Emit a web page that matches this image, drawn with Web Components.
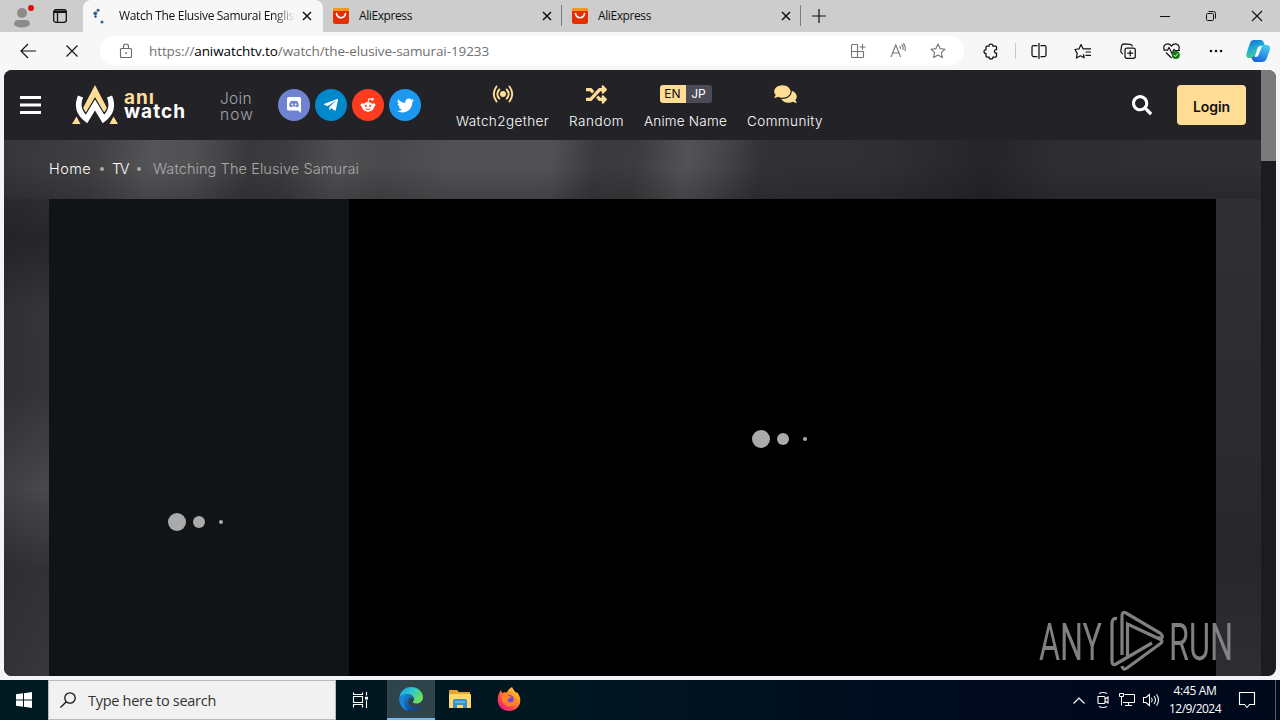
<!DOCTYPE html>
<html lang="en">
<head>
<meta charset="utf-8">
<title>Watch The Elusive Samurai</title>
<style>
	html, body {
		margin: 0;
		width: 1280px;
		height: 720px;
		overflow: hidden;
	}
</style>
</head>
<body>
<desktop-screen></desktop-screen>

<script>
// every icon: [viewBox, markup]
const icons = {
	user: ['0 0 24 24', '<g fill="#8d8a88"><circle cx="12" cy="9" r="5"/><path d="M4 21q0-5 4-5h8q4 0 4 5-8 5-16 0z"/></g><circle cx="21" cy="4" r="3" fill="#e50914"/>'],
	workspace: ['0 0 16 16', '<rect x="1.7" y="1.7" width="12.6" height="12.6" rx="2.4" fill="none" stroke="#111" stroke-width="1.3"/><path d="M2 2.500h12V5H2z" fill="#111"/><path d="M5.500 5v9" stroke="#111" stroke-width="1.300"/>'],
	spinner: ['0 0 16 16', '<g fill="#31618f"><circle cx="7" cy="2.3" r="1.5"/><circle cx="4.300" cy="5.300" r="1.9"/><circle cx="4.500" cy="8.600" r="1.3"/><circle cx="11" cy="14" r="1.5"/></g>'],
	close: ['0 0 12 12', '<path d="M2 2l8 8M10 2l-8 8" stroke="currentColor" stroke-width="1.5"/>'],
	ali: ['0 0 16 16', '<rect width="16" height="16" rx="2.5" fill="#e62e04"/><path d="M0 3V2.500Q0 0 2.500 0h11Q16 0 16 2.500V3z" fill="#f7971d"/><path d="M3.500 5.500c1 5.500 8 5.500 9 0" fill="none" stroke="#fff" stroke-width="1.500" stroke-linecap="round"/>'],
	plus: ['0 0 14 14', '<path d="M7 0v14M0 7h14" stroke="#111" stroke-width="1.2"/>'],
	minimize: ['0 0 10 10', '<path d="M0 5.500h10" stroke="#111"/>'],
	restore: ['0 0 10 10', '<rect x=".5" y="2.500" width="7" height="7" rx="1" fill="none" stroke="#111"/><path d="M2.500.500h5q2 0 2 2v5" fill="none" stroke="#111"/>'],
	winclose: ['0 0 10 10', '<path d="M0 0l10 10M10 0L0 10" stroke="#111" stroke-width="1.1"/>'],
	back: ['0 0 16 16', '<path d="M16 8H1M8 1L1 8l7 7" fill="none" stroke="#111" stroke-width="1.2"/>'],
	stop: ['0 0 12 12', '<path d="M.5.500l11 11M11.500.500l-11 11" stroke="#111" stroke-width="1.1"/>'],
	lock: ['0 0 14 16', '<path d="M1.500 5.500h10q1 0 1 1v7q0 1-1 1h-9q-1 0-1-1v-7q0-1 1-1M4.500 5.500V3.500a2.500 2.500 0 0 1 5 0v2" fill="none" stroke="#6a6a6a" stroke-width="1.1"/><circle cx="7" cy="10" r=".9" fill="#6a6a6a"/>'],
	apps: ['0 0 16 16', '<path d="M7.500 1.500H2.500q-1 0-1 1v11q0 1 1 1h10q1 0 1-1v-5H1.500M7.500 1.500v13M12.500 1v6M9.500 4h6" fill="none" stroke="#747474" stroke-width="1.1"/>'],
	aloud: ['0 0 16 16', '<path d="M1 14L5.800 2l4.800 12M2.700 10h6.200M9.500 3q1.500 1.200.8 3M11.500 1.500q2.500 2 1.300 5.500M13.300.500q3 3 1.500 7.500" fill="none" stroke="#747474" stroke-width="1.1"/>'],
	star: ['0 0 16 16', '<path d="M8 1l2.100 4.600 5 .6-3.700 3.400 1 5L8 12.100l-4.400 2.500 1-5L.9 6.200l5-.6z" fill="none" stroke="#747474" stroke-width="1.1" stroke-linejoin="round"/>'],
	puzzle: ['0 0 16 16', '<path d="M6 3a2 2 0 0 1 4 0h2.500q1 0 1 1v2.500h-.8a1.900 1.900 0 0 0 0 3.600h.8V13q0 1-1 1H10a2 2 0 0 1-4 0H4q-1 0-1-1v-2.500a2 2 0 0 1 0-4V4q0-1 1-1z" fill="none" stroke="#111" stroke-width="1.25"/>'],
	split: ['0 0 16 16', '<path d="M6.500 2.500h-4q-1.500 0-1.500 1.500v8q0 1.500 1.500 1.500h4M9.500 2.500h4q1.500 0 1.500 1.500v8q0 1.500-1.500 1.500h-4M8 0v16" fill="none" stroke="#111" stroke-width="1.25"/>'],
	favorites: ['0 0 17 16', '<path d="M8.500 11.200l.6 3.600-3.600-2-4.100 2.200.8-4.600L0 6.500l4-.6L6 1.500l2.200 4.400H16M10.500 9h5.500M10.500 12.300h5.500" fill="none" stroke="#111" stroke-width="1.200" stroke-linejoin="round"/>'],
	collections: ['0 0 16 16', '<rect x="5" y="5" width="10.300" height="10.300" rx="2" fill="none" stroke="#111" stroke-width="1.250"/><path d="M10.200 7.200v6M7.200 10.200h6M3 11Q.8 10 .8 8L1.600 3Q2 .8 4 .8l6 .5q2 .2 2.500 2" fill="none" stroke="#111" stroke-width="1.250"/>'],
	heart: ['0 0 18 16', '<path d="M1.500 7C-1 2.500 4.500-1.800 8.500 3c4-4.800 9.500-.5 7 4M3 9.500l5.500 5.500M.5 7.200h4L6 4.500l3 6 2-4 1 1h5" fill="none" stroke="#111" stroke-width="1.200"/><circle cx="12.800" cy="12" r="4" fill="#107c10"/><path d="M10.800 12l1.500 1.500 2.700-3" fill="none" stroke="#fff"/>'],
	more: ['0 0 14 4', '<g fill="#111"><circle cx="2" cy="2" r="1.300"/><circle cx="7" cy="2" r="1.300"/><circle cx="12" cy="2" r="1.300"/></g>'],
	copilot: ['0 0 24 24', '<defs><linearGradient id="a" x2=".4" y2="1"><stop stop-color="#1767d2"/><stop offset=".5" stop-color="#20a7d8"/><stop offset="1" stop-color="#48d68a"/></linearGradient><linearGradient id="b" y1="1" x2=".5" y2="0"><stop stop-color="#1554d8"/><stop offset="1" stop-color="#3fc4ee"/></linearGradient></defs><path d="M8 1h7q2 0 3 3l1 3h-5q-2 0-3 3l-2 6q-1 3-4 3H3q-4 0-2-6L4 4q1-3 4-3z" fill="url(#a)"/><path d="M16 23H9q-2 0-3-3l-.5-2q3 0 4-4l2-5q1-3 5-3h4q5 0 3 6l-3 8q-1 3-4.500 3z" fill="url(#b)"/><path d="M12 8.500q.6-1.500 2.500-1.500h1.500l-3.400 9q-.7 2-2.800 2H8.500z" fill="#f7f7f7"/>'],
	menu: ['0 0 21 18', '<path d="M0 1.500h21M0 9h21M0 16.500h21" stroke="#fff" stroke-width="3"/>'],
	logo: ['0 0 46 40', '<path d="M10.500 24L23 0l12.500 24-4 4L23 12.500 14.500 28z" fill="#ffdd95"/><path d="M8.500 11.500Q3 25 14.500 34L23 20l8.500 14Q43 25 37.500 11.500" fill="none" stroke="#232327" stroke-width="8"/><path d="M8.500 11.500Q3 25 14.500 34L23 20l8.500 14Q43 25 37.500 11.500" fill="none" stroke="#fff" stroke-width="5.600"/><path d="M4.500 31.500l4 7.500H0zM41.500 31.500L46 39h-8.500z" fill="#ffdd95"/>'],
	discord: ['0 0 16 16', '<path d="M2.500 0h11q1.500 0 1.500 1.500V16l-3-2.500H2.500Q1 13.500 1 12V1.500Q1 0 2.500 0z" fill="#fff"/><path d="M4.500 4.300q3.500-1.300 7 0 1.300 2.500 1.300 4.700-1.200 1.300-2.300 1.300L9.800 9.400H6.200l-.7.900Q4.300 10.200 3.200 9q0-2.200 1.300-4.700z" fill="#7083d3"/><circle cx="6.300" cy="7.400" r=".9" fill="#fff"/><circle cx="9.700" cy="7.400" r=".9" fill="#fff"/>'],
	telegram: ['0 0 448 512', '<path fill="#fff" d="M446.700 98.600l-67.600 318.800c-5.100 22.500-18.400 28.100-37.300 17.500l-103-75.900-49.700 47.800c-5.500 5.500-10.100 10.100-20.700 10.100l7.400-104.900 190.900-172.500c8.300-7.400-1.800-11.500-12.900-4.100L117.800 284 16.200 252.200c-22.100-6.900-22.500-22.100 4.600-32.700L418.200 66.400c18.400-6.900 34.500 4.100 28.500 32.200z"/>'],
	reddit: ['0 0 16 16', '<g fill="#fff"><ellipse cx="8" cy="10" rx="6" ry="4.700"/><circle cx="2.300" cy="8" r="1.700"/><circle cx="13.700" cy="8" r="1.700"/><circle cx="12.300" cy="2.300" r="1.400"/></g><path d="M8 6l.8-4.300 3 .7" fill="none" stroke="#fff"/><g fill="#ff3c1f"><circle cx="5.700" cy="9" r="1.100"/><circle cx="10.300" cy="9" r="1.100"/></g><path d="M5.500 11.800q2.500 1.700 5 0" fill="none" stroke="#ff3c1f" stroke-width=".9"/>'],
	twitter: ['0 0 512 512', '<path fill="#fff" d="M459.370 151.716c.325 4.548.325 9.097.325 13.645 0 138.720-105.583 298.558-298.558 298.558-59.452 0-114.680-17.219-161.137-47.106 8.447.974 16.568 1.299 25.340 1.299 49.055 0 94.213-16.568 130.274-44.832-46.132-.975-84.792-31.188-98.112-72.772 6.498.974 12.995 1.624 19.818 1.624 9.421 0 18.843-1.300 27.614-3.573-48.081-9.747-84.143-51.980-84.143-102.985v-1.299c13.969 7.797 30.214 12.670 47.431 13.319-28.264-18.843-46.781-51.005-46.781-87.391 0-19.492 5.197-37.360 14.294-52.954 51.655 63.675 129.300 105.258 216.365 109.807-1.624-7.797-2.599-15.918-2.599-24.040 0-57.828 46.782-104.934 104.934-104.934 30.213 0 57.502 12.670 76.670 33.137 23.715-4.548 46.456-13.320 66.599-25.340-7.798 24.366-24.366 44.833-46.132 57.827 21.117-2.273 41.584-8.122 60.426-16.243-14.292 20.791-32.161 39.308-52.628 54.253z"/>'],
	broadcast: ['0 0 20 18', '<circle cx="10" cy="9" r="3" fill="#ffdd95"/><path d="M6.300 4.500q-4 4.500 0 9M13.700 4.500q4 4.500 0 9M3.500 1.500q-5.500 7.500 0 15M16.500 1.500q5.500 7.500 0 15" fill="none" stroke="#ffdd95" stroke-width="1.900" stroke-linecap="round"/>'],
	random: ['0 0 512 512', '<path fill="#ffdd95" d="M504.971 359.029c9.373 9.373 9.373 24.569 0 33.941l-80 79.984c-15.010 15.010-40.971 4.490-40.971-16.971V416h-58.785a12.004 12.004 0 0 1-8.773-3.812l-70.556-75.596 53.333-57.143L352 336h32v-39.981c0-21.438 25.943-31.998 40.971-16.971l80 79.981zM12 176h84l52.781 56.551 53.333-57.143-70.556-75.596A11.999 11.999 0 0 0 122.785 96H12c-6.627 0-12 5.373-12 12v56c0 6.627 5.373 12 12 12zm372 0v39.984c0 21.460 25.961 31.980 40.971 16.971l80-79.984c9.373-9.373 9.373-24.569 0-33.941l-80-79.981C409.943 24.021 384 34.582 384 56.019V96h-58.785a12.004 12.004 0 0 0-8.773 3.812L96 336H12c-6.627 0-12 5.373-12 12v56c0 6.627 5.373 12 12 12h110.785c3.326 0 6.503-1.381 8.773-3.812L352 176h32z"/>'],
	comments: ['0 0 576 512', '<path fill="#ffdd95" d="M416 192c0-88.400-93.100-160-208-160S0 103.600 0 192c0 34.300 14.100 65.900 38 92-13.400 30.200-35.500 54.200-35.800 54.500-2.200 2.300-2.800 5.700-1.500 8.700S4.800 352 8 352c36.600 0 66.900-12.300 88.700-25 32.200 15.700 70.300 25 111.300 25 114.900 0 208-71.600 208-160zm122 220c23.900-26 38-57.700 38-92 0-66.900-53.500-124.200-129.300-148.100.9 6.600 1.300 13.300 1.300 20.100 0 105.900-107.700 192-240 192-10.800 0-21.300-.8-31.700-1.900C207.800 439.600 281.800 480 368 480c41 0 79.100-9.200 111.300-25 21.800 12.700 52.100 25 88.700 25 3.200 0 6.100-1.900 7.300-4.800 1.300-2.900.7-6.300-1.500-8.700-.3-.3-22.400-24.200-35.800-54.500z"/>'],
	search: ['0 0 512 512', '<path fill="#fff" d="M505 442.700L405.300 343c-4.500-4.500-10.600-7-17-7H372c27.600-35.300 44-79.700 44-128C416 93.100 322.900 0 208 0S0 93.100 0 208s93.100 208 208 208c48.300 0 92.700-16.400 128-44v16.300c0 6.400 2.500 12.500 7 17l99.700 99.700c9.400 9.400 24.600 9.400 33.900 0l28.300-28.300c9.400-9.400 9.400-24.600.1-34zM208 336c-70.700 0-128-57.200-128-128 0-70.700 57.200-128 128-128 70.700 0 128 57.200 128 128 0 70.700-57.200 128-128 128z"/>'],
	windows: ['0 0 16 16', '<path d="M0 2.300L7 1.300V7.500H0zM8 1.200L16 0v7.500H8zM0 8.500h7v6.200l-7-1zM8 8.500h8V16l-8-1.200z" fill="#fff"/>'],
	find: ['0 0 16 16', '<circle cx="10" cy="6" r="5.200" fill="none" stroke="#111" stroke-width="1.300"/><path d="M6.300 9.700L.5 15.500" stroke="#111" stroke-width="1.300"/>'],
	taskview: ['0 0 17 16', '<path d="M1.500.5v2h9v-2M1.500 4.500h9v6h-9zM1.500 15.500v-3h9v3M14.500 0v3.500M14.500 8.500V16" fill="none" stroke="#fff" stroke-width="1.100"/><path d="M13 4.800h3v2.800h-3z" fill="#fff"/>'],
	edge: ['0 0 24 24', '<defs><linearGradient id="e" x2="1" y2=".5"><stop stop-color="#1b9de2"/><stop offset=".55" stop-color="#2fc9c9"/><stop offset="1" stop-color="#6be05c"/></linearGradient><linearGradient id="f" x2=".8" y2="1"><stop stop-color="#1b8bdc"/><stop offset="1" stop-color="#0c3f88"/></linearGradient></defs><path d="M.3 11C1 4 6 0 12 0c7 0 12 5 12 10 0 4-3 6.500-6.500 6.500-3 0-4-1-3.500-2 2-2 1-6-3-7C7 6.500 2 8 .3 11z" fill="url(#e)"/><path d="M.3 11C2 8 6 6.500 10 7.500c2.500.6 4 2 4.300 4C12 9.500 9 12 9 15c0 4 5 6 9 5.500 2-.3 3.500-1.500 4-1.300.5.300-3 4.800-9.500 4.800C4 24-.5 17 .3 11z" fill="url(#f)"/><path d="M.3 11C2 8 5 7 8 8.500c-4 2-5 9 1 15C2.500 22 0 16 .3 11z" fill="#1788d8"/>'],
	folder: ['0 0 22 20', '<path d="M0 2q0-1 1-1h7l2 2h11v16H0z" fill="#e5a52a"/><path d="M1 5h20q1 0 1 1v13H0V6z" fill="#ffd868"/><path d="M4 19v-7q0-2 2-2h10q2 0 2 2v7h-4v-3H8v3z" fill="#3e91cf"/><path d="M6 12h10v2H6z" fill="#58b2e8"/>'],
	firefox: ['0 0 24 24', '<defs><linearGradient id="x" x1="1" y1="0" x2=".2" y2="1"><stop stop-color="#fff14d"/><stop offset=".4" stop-color="#ff9422"/><stop offset=".75" stop-color="#ff3f52"/><stop offset="1" stop-color="#e3198d"/></linearGradient></defs><path d="M15 0c1 3 3 3.500 4 6l1-1c2 3 3.500 5 3.300 9C23 20 18 24 12 24S.8 20 .7 13C.7 9 2 6 4 3l1 3c2-1 3-1 5-.500C11 3 13 1 15 0z" fill="url(#x)"/><circle cx="12" cy="13" r="5.200" fill="#7545dc"/><path d="M5 8c3-2 5-1 7 1l3 1-4 2c-1 2 1 4 4 3 2-1 2-3 1-6 4 3 4 7 1 9-5 3-11 0-12-5z" fill="#ff8427"/>'],
	chevron: ['0 0 12 7', '<path d="M.5 6.500L6 1l5.500 5.500" fill="none" stroke="#fff" stroke-width="1.200"/>'],
	meet: ['0 0 12 16', '<path d="M1 4.500h6q1 0 1 1v5q0 1-1 1H2q-1 0-1-1zM8 7l3-2v6L8 9M2 1.500q4-2 8 0M2 14.500q4 2 8 0" fill="none" stroke="#fff" stroke-width="1.100"/>'],
	network: ['0 0 16 14', '<path d="M5.500 1.500h10v8H4M9.500 9.500v3M6 12.500h7M.5.500h4v3h-4zM2.500 3.500v9" fill="none" stroke="#fff"/>'],
	sound: ['0 0 17 14', '<path d="M.5 4.500H3l3.500-3v11L3 9.500H.5zM8.500 4.700q1.600 2.300 0 4.600M11 3q3 4 0 8M13.500 1.300q4 5.700 0 11.400" fill="none" stroke="#fff" stroke-width="1.050"/>'],
	notes: ['0 0 16 16', '<path d="M.5.500h15v12h-5L8 15.500 5.500 12.500h-5z" fill="none" stroke="#fff" stroke-width="1.100"/>'],
	play: ['0 0 54 62', '<path d="M7 8.500Q2 8 2 13v38q0 5 4 3L42 33M12 45V6q0-5 4-3l34 20q4 3 1 6l-3-2M17.500 46V14l33 15.500q3 2 0 4L17 58q-4 3-5-2" fill="none" stroke="#8b8b8b" stroke-width="3.200"/>'],
};

// base: clones the class template into an open shadow root
class Base extends HTMLElement {
	constructor() {
		super();
		this.attachShadow({ mode: 'open' });
	}
	connectedCallback() {
		const template = document.createElement('template');
		template.innerHTML = this.getTemplate();
		this.shadowRoot.replaceChildren(template.content.cloneNode(true));
	}
}

class UiIcon extends Base {
	getTemplate() {
		const [box, body] = icons[this.getAttribute('name')];
		const w = this.getAttribute('w');
		const h = this.getAttribute('h') || w;
		return `
		<style>
		:host { display: block; flex: none; width: ${w}px; height: ${h}px; }
		svg { display: block; overflow: visible; }
		</style>
		<svg width="${w}" height="${h}" viewBox="${box}">${body}</svg>`;
	}
}

// one line of text, tracked so that it fills the width in "w"
class UiText extends Base {
	getTemplate() {
		return `
		<style>
		:host { display: block; flex: none; white-space: nowrap; width: ${this.getAttribute('w')}px; }
		span { display: inline-block; }
		</style>
		<span><slot></slot></span>`;
	}
	connectedCallback() {
		super.connectedCallback();
		const span = this.shadowRoot.querySelector('span');
		const w = Number(this.getAttribute('w'));
		const n = this.textContent.length;
		span.style.letterSpacing = ((w - span.getBoundingClientRect().width) / n) + 'px';
	}
}

class BrowserTab extends Base {
	getTemplate() {
		return `
		<style>
		:host { display: flex; align-items: center; box-sizing: border-box; flex: none; height: 32px; padding: 0 8px 0 10px; color: #111; border-right: 1px solid #7b7b7b; border-image: linear-gradient(transparent 18%, #7b7b7b 18%, #7b7b7b 80%, transparent 80%) 1; }
		:host([active]) { background: #f7f7f7; border: none; border-radius: 8px 8px 0 0; padding: 0 10px 0 8px; }
		.title { flex: 1; min-width: 0; overflow: hidden; margin: 0 6px 0 10px; }
		:host([active]) .title { margin-left: 12px; mask-image: linear-gradient(90deg, #000 88%, transparent); }
		</style>
		<ui-icon name="${this.getAttribute('icon')}" w="16"></ui-icon>
		<div class="title"><slot></slot></div>
		<ui-icon name="close" w="12"></ui-icon>`;
	}
}

class TabStrip extends Base {
	getTemplate() {
		return `
		<style>
		:host { display: flex; align-items: center; height: 32px; background: #cdcdcd; font: 12px/16px "Open Sans", sans-serif; }
		.user { margin-left: 10px; }
		.work { margin: 0 15px 0 18px; }
		.plus { margin-left: 11px; }
		.window { display: flex; gap: 36px; margin: 0 18px 0 auto; }
		browser-tab:nth-of-type(1) { width: 240px; }
		browser-tab:nth-of-type(2) { width: 239px; }
		browser-tab:nth-of-type(3) { width: 239px; }
		</style>
		<ui-icon class="user" name="user" w="24"></ui-icon>
		<ui-icon class="work" name="workspace" w="16"></ui-icon>
		<browser-tab active icon="spinner"><ui-text w="175">Watch The Elusive Samurai Englis</ui-text></browser-tab>
		<browser-tab icon="ali"><ui-text w="53">AliExpress</ui-text></browser-tab>
		<browser-tab icon="ali"><ui-text w="53">AliExpress</ui-text></browser-tab>
		<ui-icon class="plus" name="plus" w="14"></ui-icon>
		<div class="window">
			<ui-icon name="minimize" w="10"></ui-icon>
			<ui-icon name="restore" w="10"></ui-icon>
			<ui-icon name="winclose" w="10"></ui-icon>
		</div>`;
	}
}

class AddressBar extends Base {
	getTemplate() {
		return `
		<style>
		:host { display: flex; align-items: center; height: 38px; background: #f7f7f7; }
		.back { margin-left: 20px; }
		.stop { margin: 0 22px 0 30px; }
		.url { display: flex; align-items: center; box-sizing: border-box; width: 864px; height: 30px; border-radius: 15px; background: #fff; padding: 0 18px 0 19px; font: 13.5px "Open Sans", sans-serif; color: #707070; }
		.url ui-text { margin: 0 auto 0 16px; }
		.url b { font-weight: 400; color: #000; }
		.actions { display: flex; gap: 24px; }
		.tools { display: flex; align-items: center; gap: 28px; margin-left: 19px; }
		.line { width: 1px; height: 16px; background: #c8c8c8; margin: 0 -13px 0 -12px; }
		</style>
		<ui-icon class="back" name="back" w="16"></ui-icon>
		<ui-icon class="stop" name="stop" w="12"></ui-icon>
		<div class="url">
			<ui-icon name="lock" w="14" h="16"></ui-icon>
			<ui-text w="340">https://<b>aniwatchtv.to</b>/watch/the-elusive-samurai-19233</ui-text>
			<div class="actions">
				<ui-icon name="apps" w="16"></ui-icon>
				<ui-icon name="aloud" w="16"></ui-icon>
				<ui-icon name="star" w="16"></ui-icon>
			</div>
		</div>
		<div class="tools">
			<ui-icon name="puzzle" w="16"></ui-icon>
			<div class="line"></div>
			<ui-icon name="split" w="16"></ui-icon>
			<ui-icon name="favorites" w="17" h="16"></ui-icon>
			<ui-icon name="collections" w="16"></ui-icon>
			<ui-icon name="heart" w="18" h="16" style="margin-left:-1px"></ui-icon>
			<ui-icon name="more" w="14" h="4"></ui-icon>
			<ui-icon name="copilot" w="24" style="margin-left:-5px"></ui-icon>
		</div>`;
	}
}

class SocialLink extends Base {
	getTemplate() {
		return `
		<style>
		:host { display: grid; place-items: center; width: 32px; height: 32px; border-radius: 50%; background: var(--brand); }
		</style>
		<ui-icon name="${this.getAttribute('icon')}" w="${this.getAttribute('w')}"></ui-icon>`;
	}
}

class NavItem extends Base {
	getTemplate() {
		return `
		<style>
		:host { display: flex; flex-direction: column; align-items: center; gap: 9px; color: #fff; font-size: 13.5px; line-height: 18px; }
		.top { display: flex; align-items: center; height: 18px; }
		</style>
		<div class="top"><slot name="icon"></slot></div>
		<slot></slot>`;
	}
}

class LanguageSwitch extends Base {
	getTemplate() {
		return `
		<style>
		:host { display: flex; width: 52px; height: 18px; border-radius: 3px; overflow: hidden; font: 12px/18px Inter, sans-serif; }
		span { flex: 1; text-align: center; color: #fff; background: #4b4c55; }
		.on { color: #111; background: #ffdd95; }
		</style>
		<span class="on">EN</span><span>JP</span>`;
	}
}

class SiteLogo extends Base {
	getTemplate() {
		return `
		<style>
		:host { display: flex; gap: 6px; align-items: center; }
		.name { font: 700 19px/14px Inter, sans-serif; color: #fff; }
		.name .top { color: #ffdd95; }
		</style>
		<ui-icon name="logo" w="46" h="40"></ui-icon>
		<div class="name"><ui-text class="top" w="31">anı</ui-text><ui-text w="62">watch</ui-text></div>`;
	}
}

class SiteHeader extends Base {
	getTemplate() {
		return `
		<style>
		:host { display: flex; align-items: center; height: 70px; background: #232327; font-family: Inter, sans-serif; font-weight: 300; }
		.menu { margin-left: 16px; }
		site-logo { margin-left: 31px; }
		.join { margin-left: 34px; color: #a5a5a7; font-size: 15.5px; line-height: 16px; margin-top: 3px; width: 34px; }
		.social { display: flex; gap: 5px; margin-left: 24px; }
		nav { display: flex; gap: 20px; margin: 5px 0 0 35px; }
		.search { margin-left: auto; }
		button { box-sizing: border-box; width: 69px; height: 40px; margin: 0 15px 0 25px; border: none; border-radius: 4px; padding: 2px 0 0 16px; background: #ffdd95; color: #111; font: 600 14px Inter, sans-serif; text-align: left; }
		</style>
		<ui-icon class="menu" name="menu" w="21" h="18"></ui-icon>
		<site-logo></site-logo>
		<div class="join"><ui-text w="32">Join</ui-text><ui-text w="34">now</ui-text></div>
		<div class="social">
			<social-link icon="discord" w="16" style="--brand:#7083d3"></social-link>
			<social-link icon="telegram" w="16" style="--brand:#08c"></social-link>
			<social-link icon="reddit" w="16" style="--brand:#ff3c1f"></social-link>
			<social-link icon="twitter" w="17" style="--brand:#1d98f0"></social-link>
		</div>
		<nav>
			<nav-item><ui-icon slot="icon" name="broadcast" w="20" h="18"></ui-icon><ui-text w="93">Watch2gether</ui-text></nav-item>
			<nav-item><ui-icon slot="icon" name="random" w="21"></ui-icon><ui-text w="55">Random</ui-text></nav-item>
			<nav-item><language-switch slot="icon"></language-switch><ui-text w="83">Anime Name</ui-text></nav-item>
			<nav-item><ui-icon slot="icon" name="comments" w="23" h="20"></ui-icon><ui-text w="76">Community</ui-text></nav-item>
		</nav>
		<ui-icon class="search" name="search" w="20"></ui-icon>
		<button><ui-text w="37">Login</ui-text></button>`;
	}
}

class BreadCrumb extends Base {
	getTemplate() {
		return `
		<style>
		:host { display: flex; align-items: center; box-sizing: border-box; height: 59px; padding: 0 0 1px 45px; font: 300 14.5px/18px Inter, sans-serif; color: #fff; }
		i { width: 4px; height: 4px; border-radius: 50%; background: #aaa; margin: 0 8px 0 9px; }
		.current { color: #aaaaac; margin-left: 4px; }
		</style>
		<ui-text w="42">Home</ui-text><i></i>
		<ui-text w="16">TV</ui-text><i></i>
		<ui-text class="current" w="206">Watching The Elusive Samurai</ui-text>`;
	}
}

class LoadingDots extends Base {
	getTemplate() {
		return `
		<style>
		:host { display: flex; align-items: center; }
		i { border-radius: 50%; background: #aaa; width: 18px; height: 18px; }
		i:nth-of-type(2) { width: 12px; height: 12px; margin: 0 14px 0 7px; }
		i:nth-of-type(3) { width: 4px; height: 4px; }
		</style>
		<i></i><i></i><i></i>`;
	}
}

class WatchPage extends Base {
	getTemplate() {
		return `
		<style>
		:host { display: flex; height: 606px; border-radius: 8px; overflow: hidden; background: #1c1b20; }
		main { width: 1257px; }
		.cover { height: 536px; background:
			linear-gradient(180deg, #303034, #2a2a2e 60%, #27272b 75%, #2e2e32) 100% 59px / 60px 477px no-repeat,
			linear-gradient(100deg, rgba(28, 28, 31, .5), transparent) 0 59px / 45px 477px no-repeat,
			linear-gradient(180deg, #363638 0, #2b2b2d 40px, #3f3f42 110px, #3b3b3d 190px, #505053 290px, #48484b 310px, #343437 370px, #38383b 100%) 0 59px / 45px 477px no-repeat,
			linear-gradient(180deg, transparent 45%, rgba(20, 20, 24, .25)) 0 0 / 100% 59px no-repeat,
			linear-gradient(97deg, #363638 0, #404042 90px, #555558 150px, #505053 190px, #39393b 245px, #3c3c3e 280px, #505052 335px, #49494b 380px, #525255 450px, #515154 545px, #3a3a3d 590px, #3c3c3e 630px, #535356 680px, #48484b 710px, #323235 755px, #303034 870px, #242429 980px, #2d2d32 1050px, #303034 100%); }
		.player { display: flex; width: 1167px; height: 477px; margin-left: 45px; }
		aside { box-sizing: border-box; width: 300px; background: #111417; padding: 314px 0 0 119px; }
		.video { box-sizing: border-box; flex: 1; background: #000; padding: 231px 0 0 403px; }
		.thumb { width: 15px; height: 91px; background: #7a7a7a; }
		</style>
		<main>
			<site-header></site-header>
			<div class="cover">
				<bread-crumb></bread-crumb>
				<div class="player">
					<aside><loading-dots></loading-dots></aside>
					<div class="video"><loading-dots></loading-dots></div>
				</div>
			</div>
		</main>
		<div class="thumb"></div>`;
	}
}

class WaterMark extends Base {
	getTemplate() {
		return `
		<style>
		:host { position: absolute; left: 1039px; top: 610px; display: flex; align-items: center; gap: 7px; opacity: .92; }
		svg { display: block; overflow: visible; }
		text { font: 400 51px Roboto, sans-serif; fill: #8b8b8b; }
		</style>
		<svg width="64" height="62"><text x="0" y="50" textLength="63" lengthAdjust="spacingAndGlyphs">ANY</text></svg>
		<ui-icon name="play" w="54" h="62"></ui-icon>
		<svg width="62" height="62"><text x="-2" y="50" textLength="64" lengthAdjust="spacingAndGlyphs">RUN</text></svg>`;
	}
}

class TaskBar extends Base {
	getTemplate() {
		return `
		<style>
		:host { display: flex; align-items: center; height: 40px; background: linear-gradient(90deg, #001a22, #001620 45%, #000a1e 75%, #00081b); font-family: "Open Sans", sans-serif; }
		.start { margin: 0 16px 0 16px; }
		.search { display: flex; align-items: center; gap: 12px; box-sizing: border-box; width: 288px; height: 40px; padding-left: 11px; border: 1px solid #b9b9b9; background: #f1f1f1; color: #333; font-size: 14.5px; }
		.view { margin: 0 18px 0 16px; }
		.app { display: grid; place-items: center; box-sizing: border-box; width: 48px; height: 40px; border-bottom: 2px solid transparent; margin-right: 1px; }
		.app.on { background: #30444c; border-color: #76b9ed; }
		.tray { display: flex; align-items: center; gap: 8px; margin-left: auto; }
		.clock { display: flex; flex-direction: column; align-items: center; width: 52px; margin: 0 18px 0 9px; color: #fff; font-size: 12px; line-height: 18px; }
		.peek { width: 4px; height: 40px; border-left: 1px solid #565c68; margin-left: 20px; }
		</style>
		<ui-icon class="start" name="windows" w="16"></ui-icon>
		<div class="search"><ui-icon name="find" w="16"></ui-icon><ui-text w="128">Type here to search</ui-text></div>
		<ui-icon class="view" name="taskview" w="17" h="16"></ui-icon>
		<div class="app on"><ui-icon name="edge" w="24"></ui-icon></div>
		<div class="app"><ui-icon name="folder" w="22" h="20"></ui-icon></div>
		<div class="app"><ui-icon name="firefox" w="24"></ui-icon></div>
		<div class="tray">
			<ui-icon name="chevron" w="12" h="7" style="margin-right:4px"></ui-icon>
			<ui-icon name="meet" w="12" h="16" style="margin-right:2px"></ui-icon>
			<ui-icon name="network" w="16" h="14"></ui-icon>
			<ui-icon name="sound" w="17" h="14"></ui-icon>
		</div>
		<div class="clock"><ui-text w="43">4:45 AM</ui-text><ui-text w="52">12/9/2024</ui-text></div>
		<ui-icon name="notes" w="16"></ui-icon>
		<div class="peek"></div>`;
	}
}

class DesktopScreen extends Base {
	getTemplate() {
		return `
		<style>
		:host { display: flex; flex-direction: column; width: 1280px; height: 720px; background: #f3f4f8; }
		watch-page { margin: 0 4px 4px; }
		</style>
		<tab-strip></tab-strip>
		<address-bar></address-bar>
		<watch-page></watch-page>
		<task-bar></task-bar>
		<water-mark></water-mark>`;
	}
}

customElements.define('ui-icon', UiIcon);
customElements.define('ui-text', UiText);
customElements.define('browser-tab', BrowserTab);
customElements.define('tab-strip', TabStrip);
customElements.define('address-bar', AddressBar);
customElements.define('social-link', SocialLink);
customElements.define('nav-item', NavItem);
customElements.define('language-switch', LanguageSwitch);
customElements.define('site-logo', SiteLogo);
customElements.define('site-header', SiteHeader);
customElements.define('bread-crumb', BreadCrumb);
customElements.define('loading-dots', LoadingDots);
customElements.define('watch-page', WatchPage);
customElements.define('water-mark', WaterMark);
customElements.define('task-bar', TaskBar);
customElements.define('desktop-screen', DesktopScreen);
</script>
</body>
</html>
